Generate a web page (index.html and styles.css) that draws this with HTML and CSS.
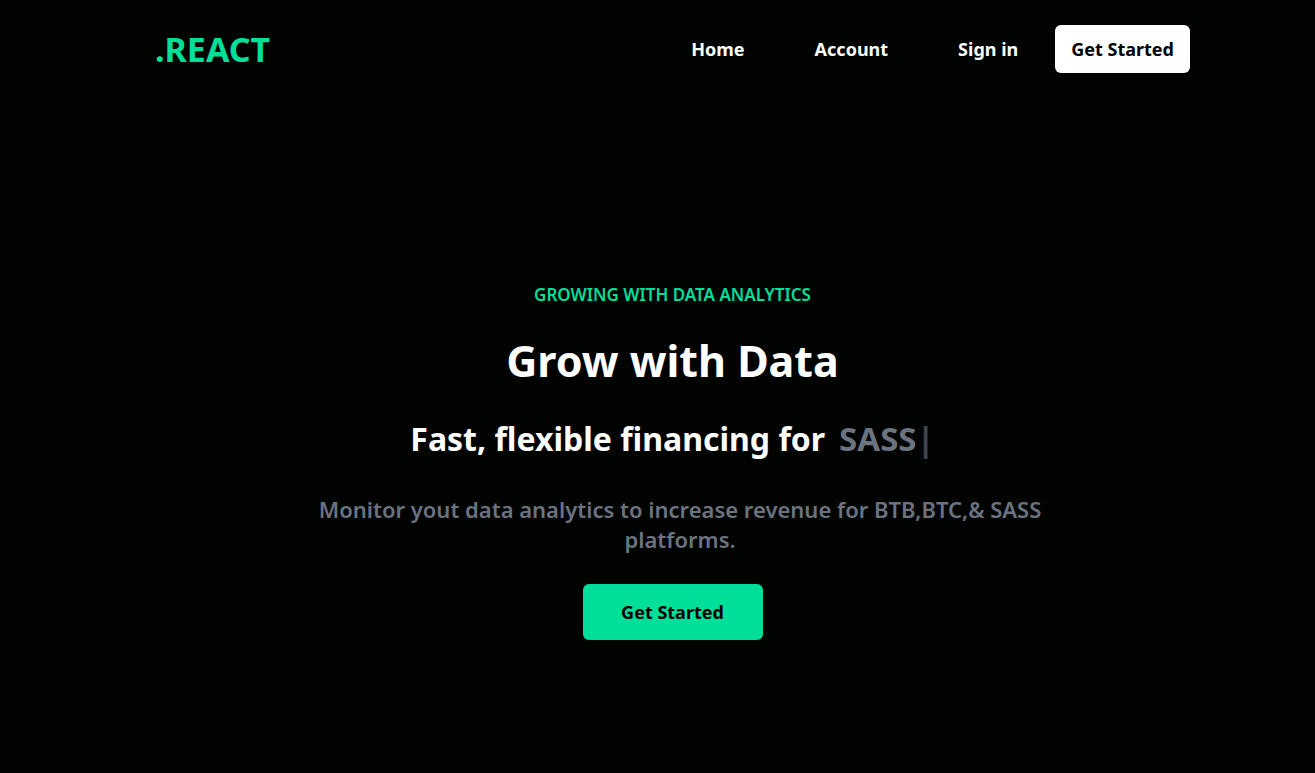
FILE: index.html
```html
<!DOCTYPE html>
<html lang="en">
<head>
<meta charset="utf-8">
<meta name="viewport" content="width=device-width, initial-scale=1">
<title>React Analytics</title>
<link rel="stylesheet" href="styles.css">
</head>
<body>
<header class="navbar">
  <h1 class="brand">.REACT</h1>
  <nav class="nav">
    <a class="nav-link" href="#home">Home</a>
    <a class="nav-link" href="#account">Account</a>
    <a class="nav-link" href="#signin">Sign in</a>
  </nav>
  <button class="button button-light" type="button">Get Started</button>
</header>
<main class="hero">
  <p class="eyebrow">GROWING WITH DATA ANALYTICS</p>
  <h2 class="title">Grow with Data</h2>
  <div class="tagline">
    <p class="tagline-text">Fast, flexible financing for</p>
    <p class="typed">SASS<span class="cursor">|</span></p>
  </div>
  <p class="summary">Monitor yout data analytics to increase revenue for BTB,BTC,&amp; SASS platforms.</p>
  <button class="button button-accent" type="button">Get Started</button>
</main>
</body>
</html>
```
FILE: styles.css
```css
* { box-sizing: border-box; margin: 0; }
body {
  min-height: 100vh;
  background: #000300;
  color: #fff;
  font-family: "Segoe UI", "Noto Sans", "Open Sans", sans-serif;
  font-weight: 700;
}
.navbar {
  display: flex;
  align-items: center;
  padding: 25px 125px 25px 155px;
}
.brand { margin-right: auto; color: #00df9a; font-size: 34px; line-height: 40px; }
.nav { display: flex; gap: 70px; margin-right: 37px; }
.nav-link { color: inherit; font-size: 18px; line-height: 28px; text-decoration: none; }
.button {
  border: 0;
  border-radius: 6px;
  color: #000;
  font: inherit;
  font-size: 18px;
  line-height: 28px;
}
.button-light { padding: 10px 16px; background: #fff; }
.button-accent { width: 180px; padding: 14px 0; background: #00df9a; }
.hero {
  display: flex;
  flex-direction: column;
  align-items: center;
  padding: 185px 0 80px 30px;
  text-align: center;
}
.eyebrow { color: #00df9a; font-size: 17px; font-weight: 600; line-height: 24px; }
.title { margin-top: 24px; font-size: 43px; line-height: 60px; }
.tagline { display: flex; gap: 14px; margin-top: 26px; font-size: 32px; line-height: 44px; }
.typed { color: #6b7280; font-size: 33px; }
.cursor { opacity: 0.6; }
.summary { max-width: 750px; padding-left: 15px; margin: 33px 0 30px; color: #6b7280; font-size: 22px; font-weight: 600; line-height: 30px; }
```
